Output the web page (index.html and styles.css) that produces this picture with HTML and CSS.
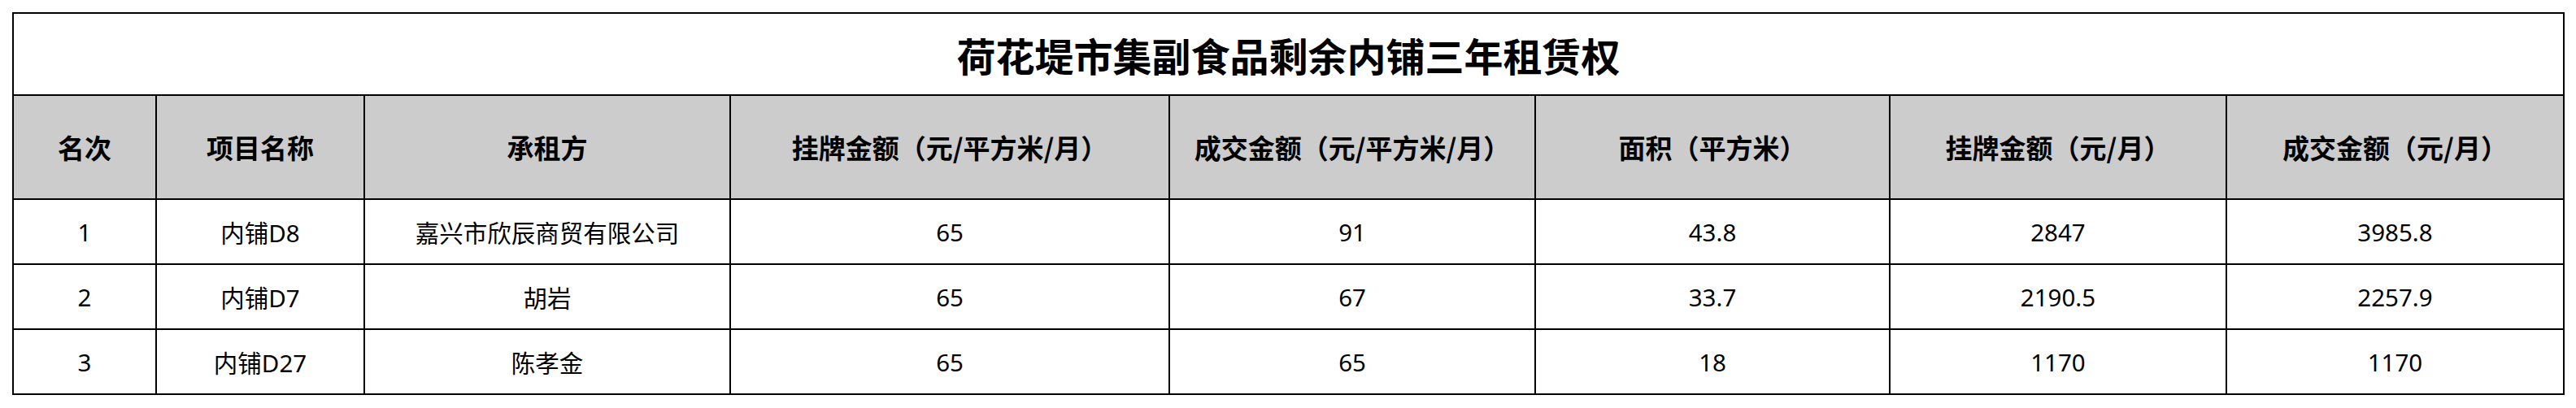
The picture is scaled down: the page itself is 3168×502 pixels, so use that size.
FILE: index.html
```html
<!DOCTYPE html>
<html lang="zh-CN">
<head>
<meta charset="utf-8">
<title>荷花堤市集副食品剩余内铺三年租赁权</title>
<link rel="stylesheet" href="styles.css">
</head>
<body>
<table class="sheet">
  <colgroup>
    <col class="c1"><col class="c2"><col class="c3"><col class="c4"><col class="c5"><col class="c6"><col class="c7"><col class="c8">
  </colgroup>
  <thead>
    <tr class="title-row"><th colspan="8" class="title">荷花堤市集副食品剩余内铺三年租赁权</th></tr>
    <tr class="head-row">
      <th>名次</th>
      <th>项目名称</th>
      <th>承租方</th>
      <th>挂牌金额（元/平方米/月）</th>
      <th>成交金额（元/平方米/月）</th>
      <th>面积（平方米）</th>
      <th>挂牌金额（元/月）</th>
      <th>成交金额（元/月）</th>
    </tr>
  </thead>
  <tbody>
    <tr class="data-row"><td>1</td><td>内铺D8</td><td>嘉兴市欣辰商贸有限公司</td><td>65</td><td>91</td><td>43.8</td><td>2847</td><td>3985.8</td></tr>
    <tr class="data-row"><td>2</td><td>内铺D7</td><td>胡岩</td><td>65</td><td>67</td><td>33.7</td><td>2190.5</td><td>2257.9</td></tr>
    <tr class="data-row"><td>3</td><td>内铺D27</td><td>陈孝金</td><td>65</td><td>65</td><td>18</td><td>1170</td><td>1170</td></tr>
  </tbody>
</table>
</body>
</html>
```

FILE: styles.css
```css
html, body {
  margin: 0;
  padding: 0;
  background: #ffffff;
}

body {
  padding: 15px 0 0 15px;
  font-family: "Noto Sans", "Noto Sans CJK SC", sans-serif;
  color: #000000;
}

.sheet {
  border-collapse: collapse;
  table-layout: fixed;
  width: 3137px;
}

.c1 { width: 176px; }
.c2 { width: 256px; }
.c3 { width: 450px; }
.c4 { width: 540px; }
.c5 { width: 450px; }
.c6 { width: 436px; }
.c7 { width: 414px; }
.c8 { width: 415px; }

.sheet th,
.sheet td {
  border: 2px solid #000000;
  text-align: center;
  vertical-align: middle;
  padding: 0;
  white-space: nowrap;
}

.title-row { height: 101px; }

.title {
  font-family: "Noto Sans CJK SC", sans-serif;
  font-weight: 700;
  font-size: 48px;
  background: #ffffff;
}

.head-row { height: 128px; }

.head-row th {
  background: #cccccc;
  font-family: "Noto Sans CJK SC", sans-serif;
  font-weight: 700;
  font-size: 33px;
}

.data-row { height: 80px; }

.data-row td {
  font-size: 29.5px;
  font-weight: 400;
}
```
